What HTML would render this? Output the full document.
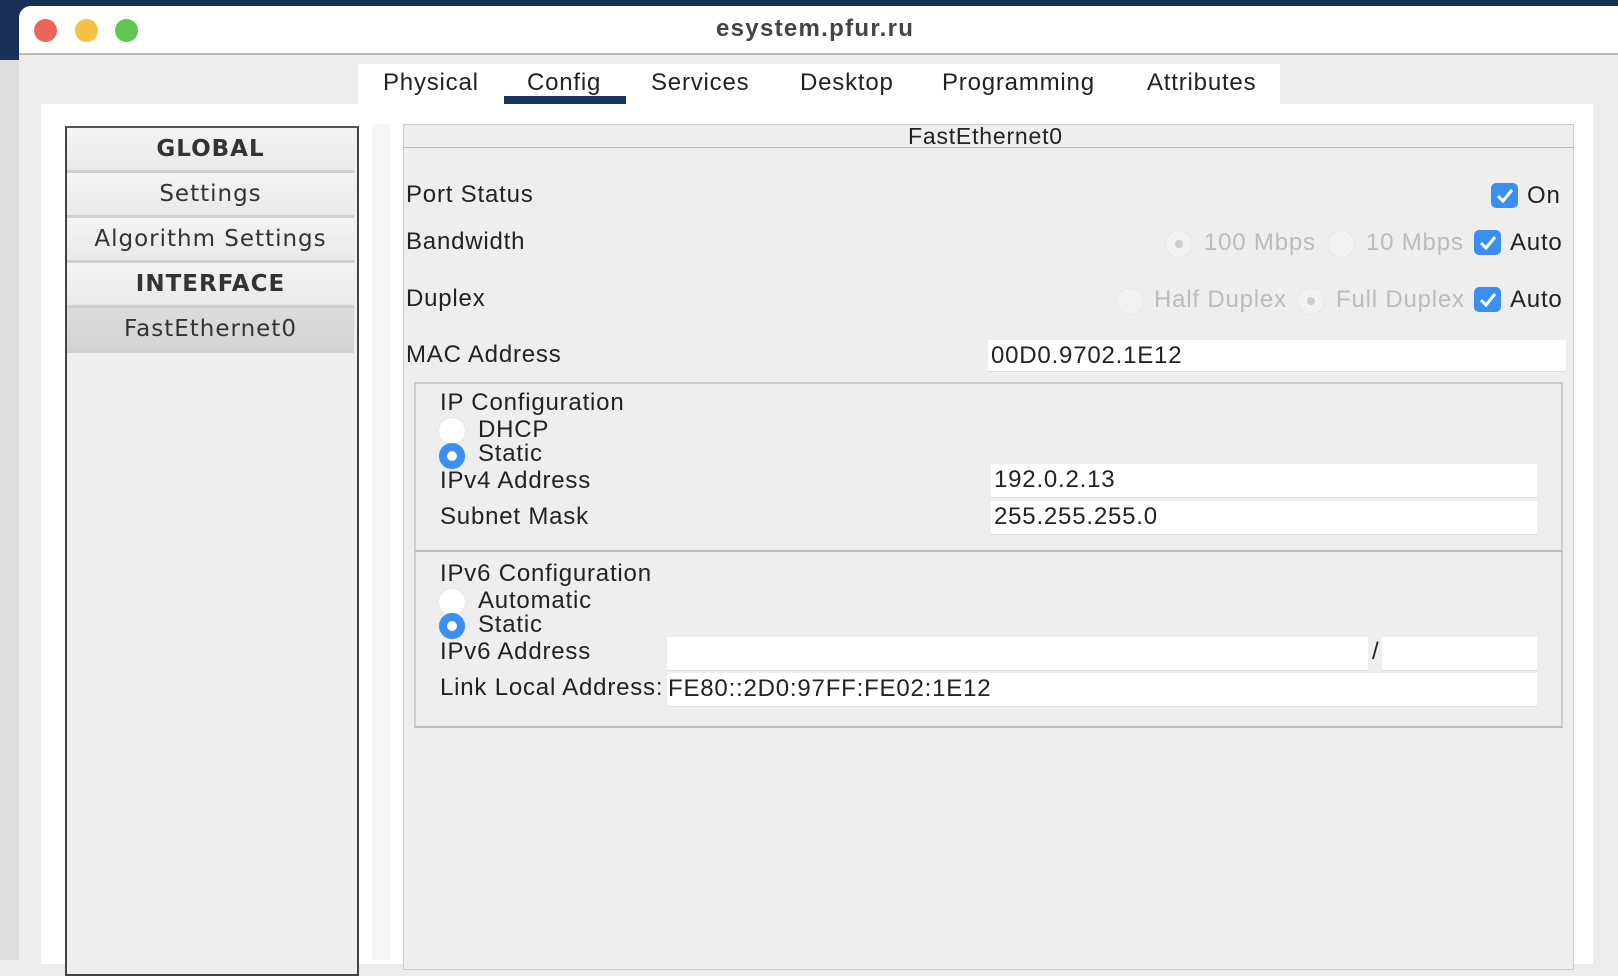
<!DOCTYPE html>
<html><head><meta charset="utf-8"><style>
*{margin:0;padding:0;box-sizing:border-box}
body{width:1618px;height:940px;overflow:hidden;background:#ececec;font-family:"Liberation Sans",Arial,sans-serif;color:#222;position:relative}
.a{position:absolute}
.t{position:absolute;font-size:24px;letter-spacing:.8px;line-height:1;white-space:nowrap}
.win{left:19px;top:6px;width:1620px;height:950px;background:#ececec;border-radius:12px 12px 0 0;overflow:hidden}
.inp{position:absolute;background:#fff;border-bottom:1px solid #ddd;font-size:24px;letter-spacing:.8px;padding-left:3px;line-height:32px}
.cb{position:absolute;width:27px;height:25px;background:#3b8ff0;border-radius:5px}
.rad{position:absolute;width:26px;height:26px;border-radius:50%;background:#fff;box-shadow:0 0 1px #ccc}
.rs{background:#3b8ff0}
.rs:after{content:"";position:absolute;left:8px;top:8px;width:10px;height:10px;border-radius:50%;background:#fff}
.li{position:absolute;left:2px;width:287px;text-align:center;line-height:42px;background:linear-gradient(#f4f4f4,#e9e9e9);border-bottom:3px solid #d0d0d0;color:#333;letter-spacing:1px;font-family:"DejaVu Sans",sans-serif;font-size:23px}
</style></head><body>
<div class="a" style="left:0;top:0;width:1618px;height:60px;background:#1a2f55"></div>
<div class="a" style="left:0;top:60px;width:19px;height:900px;background:#ddd"></div>
<div class="a win">
 <div class="a" style="left:0;top:0;width:1620px;height:49px;background:#fff;border-bottom:2px solid #bbb"></div>
 <div class="a" style="left:15px;top:13px;width:23px;height:23px;border-radius:50%;background:#ec6559"></div>
 <div class="a" style="left:56px;top:13px;width:23px;height:23px;border-radius:50%;background:#f5c142"></div>
 <div class="a" style="left:96px;top:13px;width:23px;height:23px;border-radius:50%;background:#61c554"></div>
 <div class="t" style="left:697px;top:11px;font-weight:bold;color:#444;letter-spacing:1.3px">esystem.pfur.ru</div>
</div>
<div class="a" style="left:358px;top:64px;width:922px;height:42px;background:#fff"></div>
<div class="t" style="left:383px;top:71px">Physical</div>
<div class="t" style="left:527px;top:71px">Config</div>
<div class="a" style="left:504px;top:96px;width:122px;height:8px;background:#163560"></div>
<div class="t" style="left:651px;top:71px">Services</div>
<div class="t" style="left:800px;top:71px">Desktop</div>
<div class="t" style="left:942px;top:71px">Programming</div>
<div class="t" style="left:1147px;top:71px">Attributes</div>
<div class="a" style="left:41px;top:104px;width:1552px;height:860px;background:#fff"></div>
<div class="a" style="left:65px;top:126px;width:294px;height:850px;background:#eee;border:2px solid #444;border-top-color:#555"></div>
<div class="a" style="left:65px;top:126px;width:294px">
 <div class="li" style="top:2px;font-weight:bold">GLOBAL</div>
 <div class="li" style="top:47px">Settings</div>
 <div class="li" style="top:92px">Algorithm Settings</div>
 <div class="li" style="top:137px;font-weight:bold">INTERFACE</div>
 <div class="li" style="top:182px;background:linear-gradient(#dcdcdc,#d4d4d4)">FastEthernet0</div>
</div>
<div class="a" style="left:372px;top:124px;width:18px;height:836px;background:#f6f6f6"></div>
<div class="a" style="left:403px;top:124px;width:1171px;height:846px;background:#eee;border:1px solid #ccc"></div>
<div class="a" style="left:404px;top:125px;width:1169px;height:23px;border-bottom:1px solid #bbb"></div>
<div class="t" style="left:908px;top:125px;font-size:23px">FastEthernet0</div>
<div class="t" style="left:406px;top:183px">Port Status</div>
<div class="t" style="left:406px;top:230px">Bandwidth</div>
<div class="t" style="left:406px;top:287px">Duplex</div>
<div class="t" style="left:406px;top:343px">MAC Address</div>
<div class="cb" style="left:1491px;top:183px"></div><svg class="a" style="left:1491px;top:183px" width="27" height="25"><path d="M7 13l5 5 9-11" stroke="#fff" stroke-width="3" fill="none"/></svg>
<div class="t" style="left:1527px;top:184px">On</div>
<div class="rad" style="left:1166px;top:231px;background:#f2f2f2"></div><div class="a" style="left:1175px;top:240px;width:8px;height:8px;border-radius:50%;background:#ccc"></div>
<div class="t" style="left:1204px;top:231px;color:#bbb">100 Mbps</div>
<div class="rad" style="left:1328px;top:231px;background:#f2f2f2"></div>
<div class="t" style="left:1366px;top:231px;color:#bbb">10 Mbps</div>
<div class="cb" style="left:1474px;top:230px"></div><svg class="a" style="left:1474px;top:230px" width="27" height="25"><path d="M7 13l5 5 9-11" stroke="#fff" stroke-width="3" fill="none"/></svg>
<div class="t" style="left:1510px;top:231px">Auto</div>
<div class="rad" style="left:1117px;top:288px;background:#f2f2f2"></div>
<div class="t" style="left:1154px;top:288px;color:#bbb">Half Duplex</div>
<div class="rad" style="left:1298px;top:288px;background:#f2f2f2"></div><div class="a" style="left:1307px;top:297px;width:8px;height:8px;border-radius:50%;background:#ccc"></div>
<div class="t" style="left:1336px;top:288px;color:#bbb">Full Duplex</div>
<div class="cb" style="left:1474px;top:287px"></div><svg class="a" style="left:1474px;top:287px" width="27" height="25"><path d="M7 13l5 5 9-11" stroke="#fff" stroke-width="3" fill="none"/></svg>
<div class="t" style="left:1510px;top:288px">Auto</div>
<div class="inp" style="left:988px;top:340px;width:578px;height:32px">00D0.9702.1E12</div>
<div class="a" style="left:414px;top:382px;width:1149px;height:170px;border:2px solid #ccc;border-bottom-color:#bbb"></div>
<div class="a" style="left:414px;top:552px;width:1149px;height:176px;border:2px solid #ccc;border-top:none;border-bottom-color:#bbb"></div>
<div class="t" style="left:440px;top:391px">IP Configuration</div>
<div class="rad" style="left:439px;top:418px"></div><div class="t" style="left:478px;top:418px">DHCP</div>
<div class="rad rs" style="left:439px;top:443px"></div><div class="t" style="left:478px;top:442px">Static</div>
<div class="t" style="left:440px;top:469px">IPv4 Address</div>
<div class="t" style="left:440px;top:505px">Subnet Mask</div>
<div class="inp" style="left:991px;top:464px;width:546px;height:34px">192.0.2.13</div>
<div class="inp" style="left:991px;top:501px;width:546px;height:34px">255.255.255.0</div>
<div class="t" style="left:440px;top:562px">IPv6 Configuration</div>
<div class="rad" style="left:439px;top:589px"></div><div class="t" style="left:478px;top:589px">Automatic</div>
<div class="rad rs" style="left:439px;top:613px"></div><div class="t" style="left:478px;top:613px">Static</div>
<div class="t" style="left:440px;top:640px">IPv6 Address</div>
<div class="t" style="left:440px;top:676px">Link Local Address:</div>
<div class="inp" style="left:667px;top:637px;width:701px;height:34px"></div>
<div class="t" style="left:1372px;top:640px">/</div>
<div class="inp" style="left:1382px;top:637px;width:155px;height:34px"></div>
<div class="inp" style="left:667px;top:673px;width:870px;height:34px;padding-left:1px">FE80::2D0:97FF:FE02:1E12</div>
</body></html>
